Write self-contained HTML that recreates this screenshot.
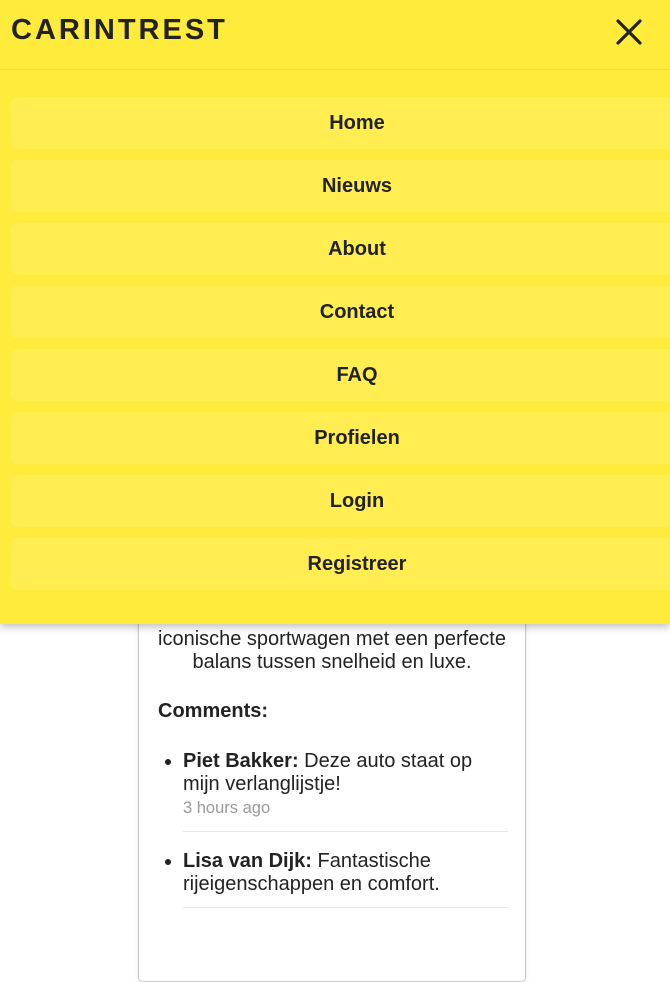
<!DOCTYPE html>
<html><head><meta charset="utf-8"><style>
body{margin:0;width:670px;height:892px;overflow:hidden;background:#fff;font-family:"Liberation Sans",Arial,sans-serif;color:#222;position:relative}
.card{position:absolute;left:138px;top:560px;width:386px;height:420px;border:1px solid #ccc;border-radius:4px;box-shadow:0 1px 4px rgba(0,0,0,.1)}
.desc{position:absolute;left:140px;width:384px;top:628px;text-align:center;font-size:20px;line-height:23px}
.ch{position:absolute;left:158px;top:700px;font-size:20px;font-weight:bold}
ul{position:absolute;left:158px;top:750px;margin:0;padding:0 0 0 25px;width:325px;font-size:20px;line-height:23px}
li{padding-bottom:11px;margin-bottom:18px;border-bottom:1px solid #e8e8e8}
.t{color:#999;font-size:16.5px;line-height:24px;margin-top:0}
.menu{position:absolute;left:0;top:0;width:670px;height:624px;background:#ffeb3b;box-shadow:0 3px 8px rgba(0,0,0,.25)}
.hd{height:69px;border-bottom:1px solid #f4de2e;position:relative}
.logo{position:absolute;left:11px;top:14px;font-size:29px;font-weight:bold;letter-spacing:3px;color:#222}
.x{position:absolute;left:615px;top:18px}
.it{position:absolute;left:11px;width:659px;height:52px;background:#ffed52;border-radius:6px 0 0 6px;font-size:20px;font-weight:bold;line-height:52px;color:#222}
.it span{position:absolute;left:0;width:692px;text-align:center;top:0}
</style></head><body>
<div class="card"></div>
<div class="desc">iconische sportwagen met een perfecte<br>balans tussen snelheid en luxe.</div>
<div class="ch">Comments:</div>
<ul>
<li><b>Piet Bakker:</b> Deze auto staat op mijn verlanglijstje!<div class="t">3 hours ago</div></li>
<li><b>Lisa van Dijk:</b> Fantastische rijeigenschappen en comfort.</li>
</ul>
<div class="menu">
<div class="hd"><div class="logo">CARINTREST</div>
<svg class="x" width="28" height="28" viewBox="0 0 28 28"><path d="M3 3L25 25M25 3L3 25" stroke="#222" stroke-width="3.2" stroke-linecap="round"/></svg></div>
<div class="it" style="top:97px"><span>Home</span></div>
<div class="it" style="top:160px"><span>Nieuws</span></div>
<div class="it" style="top:223px"><span>About</span></div>
<div class="it" style="top:286px"><span>Contact</span></div>
<div class="it" style="top:349px"><span>FAQ</span></div>
<div class="it" style="top:412px"><span>Profielen</span></div>
<div class="it" style="top:475px"><span>Login</span></div>
<div class="it" style="top:538px"><span>Registreer</span></div>
</div>
</body></html>
